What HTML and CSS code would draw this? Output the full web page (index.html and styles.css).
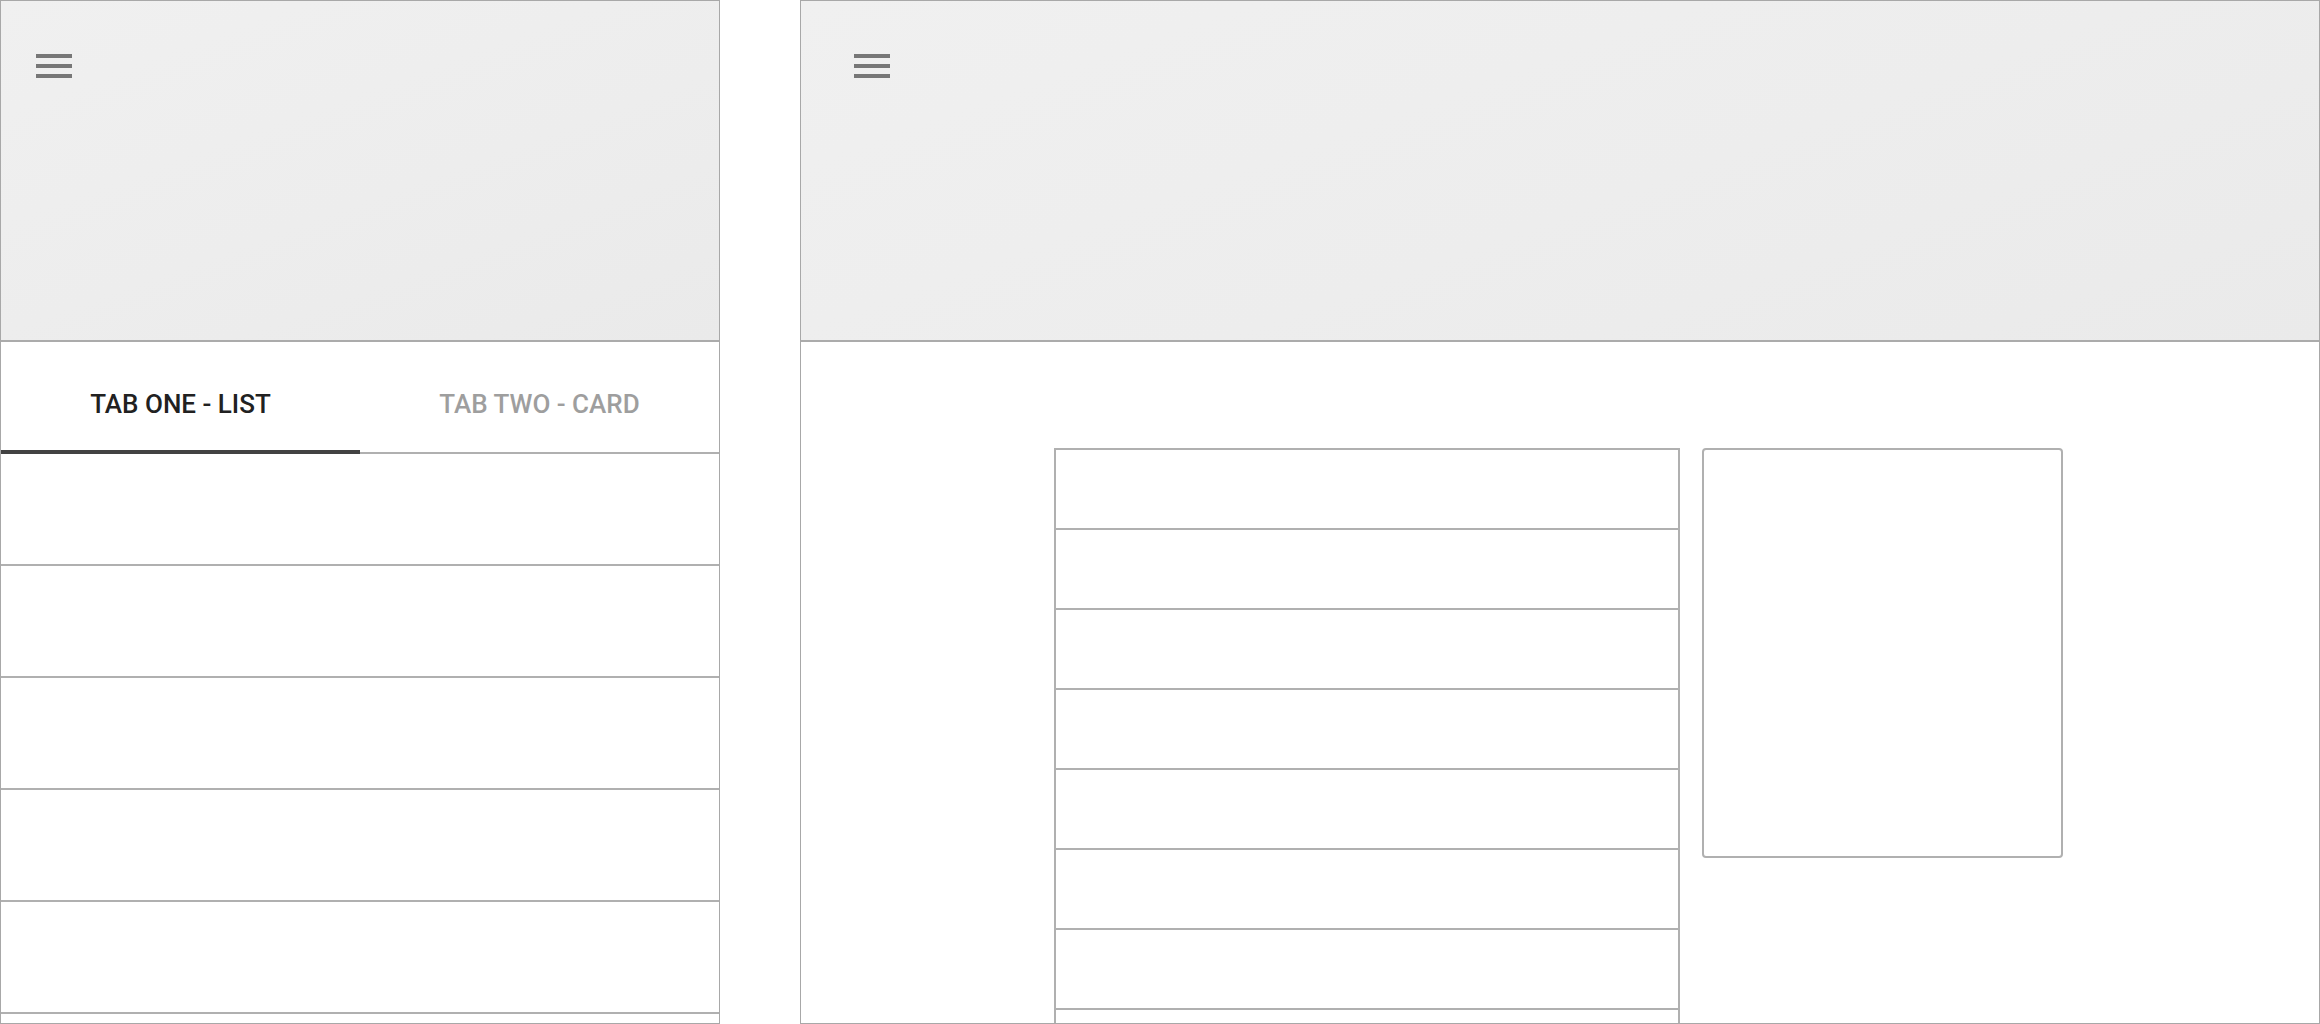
FILE: index.html
```html
<!DOCTYPE html>
<html lang="en">
<head>
<meta charset="utf-8">
<title>Tabs layout</title>
<link rel="stylesheet" href="styles.css">
</head>
<body>
<div class="screens">
  <section class="panel panel-mobile">
    <header class="appbar appbar-mobile">
      <svg class="menu-icon" viewBox="0 0 24 24" width="48" height="48" aria-hidden="true"><path d="M3 18h18v-2H3v2zm0-5h18v-2H3v2zm0-7v2h18V6H3z"/></svg>
    </header>
    <nav class="tabbar">
      <div class="tab tab-active">TAB ONE - LIST</div>
      <div class="tab">TAB TWO - CARD</div>
    </nav>
    <div class="mobile-list">
      <div class="mobile-row"></div>
      <div class="mobile-row"></div>
      <div class="mobile-row"></div>
      <div class="mobile-row"></div>
      <div class="mobile-row"></div>
      <div class="mobile-row"></div>
    </div>
  </section>
  <section class="panel panel-desktop">
    <header class="appbar appbar-desktop">
      <svg class="menu-icon" viewBox="0 0 24 24" width="48" height="48" aria-hidden="true"><path d="M3 18h18v-2H3v2zm0-5h18v-2H3v2zm0-7v2h18V6H3z"/></svg>
    </header>
    <div class="desktop-content">
      <div class="desktop-list">
        <div class="desktop-row"></div>
        <div class="desktop-row"></div>
        <div class="desktop-row"></div>
        <div class="desktop-row"></div>
        <div class="desktop-row"></div>
        <div class="desktop-row"></div>
        <div class="desktop-row"></div>
        <div class="desktop-row"></div>
      </div>
      <div class="desktop-card"></div>
    </div>
  </section>
</div>
</body>
</html>
```
FILE: styles.css
```css
html, body {
  margin: 0;
  padding: 0;
  background: #ffffff;
}
body {
  font-family: Roboto, "Liberation Sans", Arial, sans-serif;
  overflow: hidden;
}
.screens {
  display: flex;
  gap: 80px;
  width: 2320px;
  height: 1024px;
}
.panel {
  box-sizing: border-box;
  height: 1024px;
  border: 1px solid #a8a8a8;
  overflow: hidden;
  display: flex;
  flex-direction: column;
  background: #ffffff;
}
.panel-mobile {
  width: 720px;
  flex: none;
}
.panel-desktop {
  flex: 1;
}
.appbar {
  flex: none;
  height: 298px;
  border-bottom: 2px solid #ababab;
  background: linear-gradient(160deg, #f0f0f0 0%, #ededed 55%, #eaeaea 100%);
  padding-top: 41px;
}
.appbar-mobile {
  padding-left: 29px;
}
.appbar-desktop {
  padding-left: 47px;
}
.menu-icon {
  display: block;
  fill: #777777;
}
.tabbar {
  flex: none;
  display: flex;
  border-bottom: 2px solid #b0b0b0;
}
.tab {
  flex: 1;
  position: relative;
  box-sizing: border-box;
  height: 110px;
  padding-top: 46px;
  text-align: center;
  font-size: 26px;
  line-height: 32px;
  font-weight: 500;
  color: #9e9e9e;
}
.tab-active {
  color: #212121;
}
.tab-active::after {
  content: "";
  position: absolute;
  left: -1px;
  right: 0;
  bottom: -2px;
  height: 4px;
  background: #424242;
}
.mobile-list {
  flex: none;
}
.mobile-row {
  height: 110px;
  border-bottom: 2px solid #b0b0b0;
}
.desktop-content {
  flex: 1;
  display: flex;
  justify-content: center;
  align-items: flex-start;
  gap: 22px;
  padding-top: 106px;
  padding-right: 3px;
  min-height: 0;
}
.desktop-list {
  width: 626px;
  box-sizing: border-box;
  border: 2px solid #b0b0b0;
  border-bottom: none;
  flex: none;
}
.desktop-row {
  height: 78px;
  border-bottom: 2px solid #b0b0b0;
}
.desktop-card {
  width: 361px;
  height: 410px;
  box-sizing: border-box;
  border: 2px solid #b0b0b0;
  border-radius: 4px;
  flex: none;
}
```
